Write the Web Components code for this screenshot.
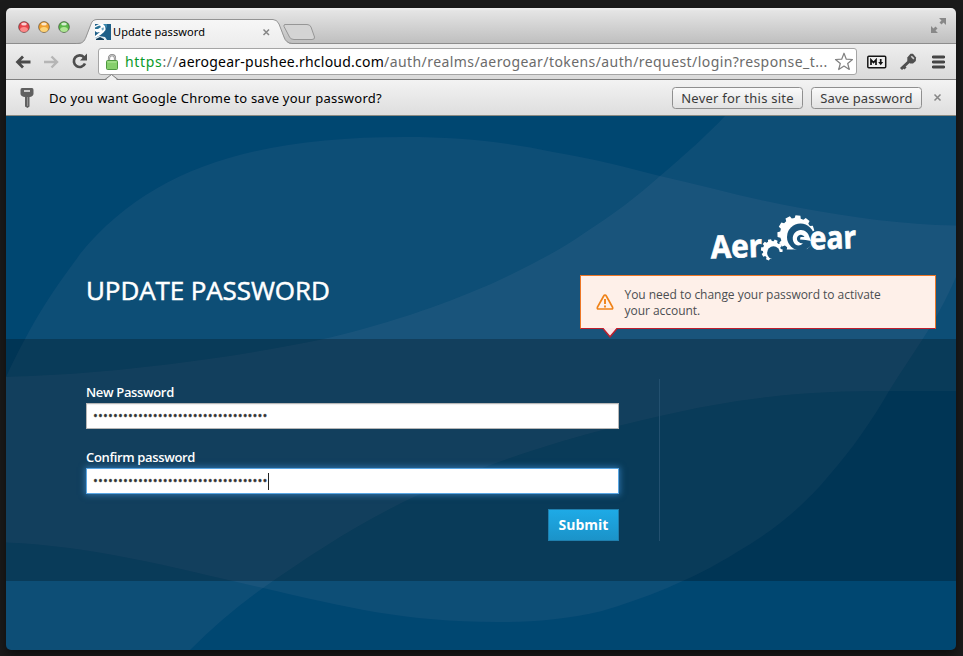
<!DOCTYPE html>
<html lang="en">
<head>
<meta charset="utf-8">
<title>Update password</title>
<style>
html,body{margin:0;height:100%;overflow:hidden}
body{background:#1b1b1b;font-family:"Noto Sans","Open Sans",sans-serif;color:#000}
</style>
</head>
<body>
<browser-window>
  <tab-strip slot="chrome">Update password</tab-strip>
  <nav-bar slot="chrome"></nav-bar>
  <info-bar slot="chrome">Do you want Google Chrome to save your password?
    <bar-button slot="actions" style="--w:131px;--ls:.24px">Never for this site</bar-button>
    <bar-button slot="actions" style="--w:111px;--ls:.14px">Save password</bar-button>
  </info-bar>
  <login-page>
    <page-title slot="title">UPDATE PASSWORD</page-title>
    <aero-logo slot="side"></aero-logo>
    <alert-box slot="side">You need to change your password to activate your account.</alert-box>
    <password-field slot="form" label="New Password"></password-field>
    <password-field slot="form" label="Confirm password" focused></password-field>
    <submit-button slot="form">Submit</submit-button>
  </login-page>
</browser-window>
<script>
const define = (name, html) => customElements.define(name, class extends HTMLElement {
  constructor() {
    super();
    const t = document.createElement('template');
    t.innerHTML = typeof html === 'function' ? html(this) : html;
    this.attachShadow({mode: 'open'}).append(t.content.cloneNode(true));
  }
});

define('browser-window', `<style>
:host{display:flex;flex-direction:column;box-sizing:border-box;width:963px;height:656px;padding:8px 7px 6px 6px}
.w{display:flex;flex-direction:column;flex:1;border-radius:5px;overflow:hidden;box-shadow:0 5px 12px #0008}
</style><div class="w"><slot name="chrome"></slot><slot></slot></div>`);

define('tab-strip', `<style>
:host{display:flex;height:36px;background:linear-gradient(#f0f0f0 0,#e4e4e4 3px,#bfbfbf 35px);position:relative;align-items:flex-end}
svg.sh{position:absolute;left:0;top:0}
.lights{display:flex;gap:8px;padding:0 0 11px 12px;width:77px;box-sizing:border-box}
.tab{display:flex;align-items:center;width:176px;height:23px;margin-left:12px;font-size:11px;letter-spacing:.09px;position:relative}
.tab span{flex:1;padding:0 0 2px 2px}
.lights svg,.tab svg{display:block;flex:none}
.full{position:absolute;right:10px;top:10px}
</style>
<svg class="sh" width="950" height="36"><defs><linearGradient id="t" x2="0" y2="1"><stop stop-color="#f7f7f7"/><stop offset="1" stop-color="#ededed"/></linearGradient></defs>
<path d="M0 35.500H950" stroke="#8d8d8d"/>
<path d="M70 36C76 36 78 34 80 30L85 16Q86.500 11.500 91 11.500H267Q271 11.500 273 16L278 30Q280 35.500 286 36Z" fill="url(#t)"/>
<path d="M70 35.500C77 35.500 78 33.500 80 29L85 16Q86.500 11.500 91 11.500H267Q271 11.500 273 16L278 29Q280 35 286 35.500" fill="none" stroke="#949494"/>
<path d="M279 16.500H301Q304 16.500 305 19L308.500 29Q309 31.500 306 31.500H288Q284.500 31.500 283.500 29L278 18.500Q277.500 16.500 279 16.500Z" fill="#d4d4d4" stroke="#969696"/></svg>
<div class="lights">${[['#e8454b','#ff9b98'],['#f0a030','#ffe08c'],['#5cb84a','#c4f0a8']].map(([a,b]) =>
`<svg width="12" height="12"><circle cx="6" cy="6" r="5.400" fill="${a}" stroke="#0006"/><ellipse cx="6" cy="8.400" rx="3.800" ry="2.500" fill="${b}" opacity=".8"/><ellipse cx="6" cy="3" rx="2.800" ry="1.500" fill="#fff" opacity=".75"/></svg>`).join('')}</div>
<div class="tab"><svg width="16" height="16" style="margin-bottom:2px"><path d="M0 0H16V16H0Z" fill="#1e5f88"/><path d="M5 0H12V4L9 1Z" fill="#3a88ad"/><path d="M0 2 4 0H8Q11 2 10.500 6L8.500 8.500 5.500 11 0 14V12L5 8 2 8.500 0 7Z" fill="#fff"/><path d="M0 3.500 3 2 5 1.500 6 3 3 5 0 5Z" fill="#2c7396"/><path d="M6.500 4 9 3.500 8.500 6 7 6.500Z" fill="#6fa8c4"/><path d="M0 16V14L4 12 10 13 12 16Z" fill="#e4eef3"/><path d="M1 15 5 13 9 15V16H1Z" fill="#123c5a"/></svg>
<span><slot></slot></span><svg width="9" height="9" style="margin:0 0 1px"><path d="M1.500 1.500 7 7M7 1.500 1.500 7" stroke="#858585" stroke-width="1.500"/></svg></div>
<svg class="full" width="15" height="15"><path d="M8 0H15V7L12.500 4.500 10.500 6.500 8.500 4.500 10.500 2.500ZM0 8V15H7L4.500 12.500 6.500 10.500 4.500 8.500 2.500 10.500Z" fill="#888"/></svg>`);

define('nav-bar', `<style>
:host{display:flex;height:36px;box-sizing:border-box;background:linear-gradient(#eee,#dadada);border-bottom:1px solid #7f7f7f;align-items:center;padding:0 10px 0 9px}
svg{display:block;flex:none}
.box{display:flex;align-items:center;box-sizing:border-box;width:759px;height:27px;margin-left:10px;background:#fff;border:1px solid #a5a5a5;border-radius:3px;padding:0 4px 0 7px;font-size:14px;white-space:pre}
.u{width:709px;padding-left:7px;flex:none;color:#6b6b6b;letter-spacing:.42px}
.u b{font-weight:400;letter-spacing:.66px}.u .g{color:#0a9a2a}.u .h{color:#000;letter-spacing:.24px}
</style>
<svg width="17" height="16"><path d="M15.500 8H3M8 2.500 2.500 8 8 13.500" fill="none" stroke="#4a4a4a" stroke-width="2.800"/></svg>
<svg width="17" height="16" style="margin-left:11px"><path d="M1 8H13.500M8.500 2.500 14 8 8.500 13.500" fill="none" stroke="#b5b5b5" stroke-width="2.400"/></svg>
<svg width="17" height="17" style="margin-left:11px"><path d="M13 4.300A5.800 5.800 0 1 0 14 10.500" fill="none" stroke="#4e4e4e" stroke-width="2.700"/><path d="M16 0.500V7.500H9Z" fill="#4e4e4e"/></svg>
<div class="box"><svg width="12" height="16"><path d="M3 8V4.200a3 3 0 0 1 6 0V8" fill="none" stroke="#888" stroke-width="2.200"/><path d="M3 8V4.200a3 3 0 0 1 6 0V8" fill="none" stroke="#ddd" stroke-width=".7"/><rect x=".5" y="6.500" width="11" height="9" rx="1" fill="#86cf6c" stroke="#4f9940"/><path d="M1.500 8H10.500" stroke="#b6eb9e"/></svg>
<div class="u"><b class="g">https</b><b>://</b><b class="h">aerogear-pushee.rhcloud.com</b>/auth/realms/aerogear/tokens/auth/request/login?response_t...</div>
<svg width="20" height="19"><path d="M10 1.200 12.300 7.200 18.500 7.500 13.700 11.500 15.300 17.500 10 14.100 4.700 17.500 6.300 11.500 1.500 7.500 7.700 7.200Z" fill="#fff" stroke="#808080" stroke-width="1.200" stroke-linejoin="round"/></svg></div>
<svg width="20" height="14" style="margin-left:10px"><rect x=".8" y="1.300" width="17.900" height="11.400" rx="1" fill="#eee" stroke="#151515" stroke-width="1.500"/><path d="M4 10V4.800L6.500 7.500 9 4.800V10M13.700 4V8" fill="none" stroke="#111" stroke-width="1.700"/><path d="M11.200 7H16.200L13.700 10.300Z" fill="#111"/></svg>
<svg width="18" height="18" style="margin-left:12px"><path d="M10 8.500 2 16M4.500 13.500 6.500 15.500" stroke="#505050" stroke-width="3"/><path d="M8.300 4.500 11.500.8 14 .8 17 4.500 16.800 8 14 10.500 11 10.500 8.300 8Z" fill="#505050"/><path d="M12.300 3.300 14.900 5.900" stroke="#d0d0d0" stroke-width="1.600"/></svg>
<svg width="13" height="14" style="margin-left:15px"><path d="M1.300 2H11.700M1.300 7H11.700M1.300 12H11.700" stroke="#454545" stroke-width="2.800" stroke-linecap="round"/></svg>`);

define('info-bar', `<style>
:host{display:flex;height:36px;box-sizing:border-box;background:linear-gradient(#f3f3f3,#dedede);border-bottom:1px solid #8a8a82;align-items:center;padding:0 14px 0 14px;position:relative;font-size:13px;letter-spacing:.22px}
svg{display:block;flex:none}.nub{position:absolute;left:98px;top:-6px}
.m{flex:1;padding-left:15px}.a{display:flex;gap:8px}
</style><svg class="nub" width="16" height="7"><path d="M1 7 7.500.500 14 7Z" fill="#f1f1f1"/><path d="M1 5.500 7.500.500 14 5.500" fill="none" stroke="#7f7f7f"/></svg>
<svg width="14" height="20"><path d="M2 0H12Q13.500 0 13.500 2V6Q13 8.500 9.500 9V18.500L7.500 20 5 18.500V9Q1 8.500 .5 6V2Q.5 0 2 0Z" fill="#606060"/><path d="M4 3H10" stroke="#eee" stroke-width="1.700"/><path d="M7.600 9V18" stroke="#999"/></svg>
<div class="m"><slot></slot></div><div class="a"><slot name="actions"></slot></div>
<svg width="9" height="9" style="margin-left:11px"><path d="M1.500 1.500 7.500 7.500M7.500 1.500 1.500 7.500" stroke="#858585" stroke-width="1.500"/></svg>`);

define('bar-button', `<style>
:host{display:flex;justify-content:center;align-items:center;width:var(--w);height:22px;box-sizing:border-box;border:1px solid #8f8f8f;border-radius:3.500px;background:linear-gradient(#fafafa,#e2e2e2);color:#3a3a3a;font-size:13px;letter-spacing:var(--ls);white-space:nowrap}
</style><slot></slot>`);

define('login-page', `<style>
:host{display:flex;flex-direction:column;flex:1;background:#004771;position:relative;font-family:"Open Sans",sans-serif}
.bg{position:absolute;left:0;top:0}
header{display:grid;grid-template-columns:494px 356px;height:223px;box-sizing:border-box;padding-left:80px;position:relative}
.side{display:flex;flex-direction:column;padding-top:97px}
main{display:flex;height:242px;background:rgba(0,0,0,.245);position:relative;padding:40px 0 0 80px;box-sizing:border-box}
.form{display:flex;flex-direction:column;width:533px;padding-right:40px;height:162px;border-right:1px solid #23506f}
</style>
<svg class="bg" width="950" height="534" viewBox="6 116 950 534"><g fill="#f0c8dc" fill-opacity=".054">
<path d="M6 377C40 305 62 280 80 254C150 168 255 137 405 137C460 137 505 142 553 152C595 159 625 167 660 176C705 186 750 199 798 207.500C850 217 905 225 956 225.500V277C935 325 918 345 889 391C871 422 853 448 829 475.600C803 507 772 532 737 552C693 580 640 600 602 611C565 620 530 622 497 622C405 622 345 607 263 588C175 568 95 546 6 542.500Z"/>
<path d="M6 377C62 375 105 372 154 366C215 359 265 351 319 340C385 325 440 306 491 284C530 266 560 250 583 234C615 213 638 196 660 176C686 154 707 135 725 116H956V391H889C845 391 808 392 768 397C730 401 695 408 660 416Q638 421 618 426C570 438 525 452 485 467Q450 480 418 495C360 522 310 555 263 588Q225 615 190 650H6Z"/></g></svg>
<header><slot name="title"></slot><div class="side"><slot name="side"></slot></div></header>
<main><div class="form"><slot name="form"></slot></div></main>`);

define('page-title', `<style>
:host{display:block;align-self:start;padding-top:157px;font-size:26px;line-height:35px;letter-spacing:-.1px;color:#fff;white-space:nowrap;-webkit-text-stroke:.5px #fff}
</style><slot></slot>`);

// Outline of a toothed wheel with n teeth between radii r and R.
const wheel = (cx, cy, r, R, n, turn) => {
  const p = [];
  for (let i = 0; i < n; i++) for (const [f, q] of [[-.34, r], [-.23, R], [.23, R], [.34, r]]) {
    const a = (i + f) / n * 2 * Math.PI + turn;
    p.push((cx + q * Math.cos(a)).toFixed(2) + ' ' + (cy + q * Math.sin(a)).toFixed(2));
  }
  return 'M' + p.join('L') + 'Z';
};
define('aero-logo', `<style>
:host{display:block;height:62px;padding-left:130px;box-sizing:border-box}
svg{display:block;margin-top:-13px}text{font:700 31.500px "Open Sans",sans-serif;fill:#fff;stroke:#fff;stroke-width:.7px}
</style><svg width="170" height="75" viewBox="710 200 170 75">
<defs><mask id="b"><path d="M770 210H820V249.500H770Z" fill="#fff"/><circle cx="800.500" cy="237" r="13.500"/></mask>
<mask id="s"><path d="M758 236H790V262H758Z" fill="#fff"/><circle cx="773.500" cy="252.700" r="6.400"/><path d="M773 252 786 252V264H771Z"/></mask></defs>
<text transform="translate(711 258.500) rotate(-2)" textLength="51.500" lengthAdjust="spacingAndGlyphs">Aer</text>
<path d="${wheel(796, 234, 16, 18.7, 11, .25)}" fill="#fff" mask="url(#b)"/>
<path d="${wheel(771.8, 250, 9, 10.9, 10, .1)}" fill="#fff" mask="url(#s)"/>
<path d="M795.500 244.500A8.300 8.300 0 1 1 809 236L811 241Q806 239.500 800 239.500L800.500 237H804.500A4 4 0 1 0 798 241.500Q800 243.500 803 243.500Q799 247 795.500 244.500Z" fill="#fff"/>
<text transform="translate(810 249.600) rotate(-2)" textLength="46.500" lengthAdjust="spacingAndGlyphs">ear</text></svg>`);

define('alert-box', `<style>
:host{display:flex;width:356px;height:54px;box-sizing:border-box;border:1px solid #ec7626;border-bottom-color:#bf1e2c;background:#fef0e9;position:relative;align-items:center;padding-left:15px;font-size:12px;line-height:16px;letter-spacing:-.035px;color:#4b4e51}
svg{display:block;flex:none}p{margin:1px 0 0 10.500px;width:270px}
.arrow{position:absolute;left:21px;bottom:-10px}
</style><svg width="18" height="18"><path d="M9 2Q9.800 2 10.300 3L16.500 14Q17.200 16 15.500 16H2.500Q.8 16 1.500 14L7.700 3Q8.200 2 9 2Z" fill="none" stroke="#ef8218" stroke-width="1.700"/><path d="M9 6V11M9 12.500V14.500" stroke="#ef8218" stroke-width="1.900"/></svg>
<p><slot></slot></p><svg class="arrow" width="16" height="10"><path d="M1 0H15L8 9Z" fill="#fbe6e7"/><path d="M.5 0 8 8.800 15.500 0" fill="none" stroke="#bf1e2c" stroke-width="1.400"/></svg>`);

define('password-field', el => `<style>
:host{display:block;height:65px}
label{display:block;font-weight:600;font-size:13px;line-height:18px;padding:4px 0 2px;letter-spacing:-.35px;color:#fff}
.f{display:flex;align-items:center;height:26px;box-sizing:border-box;border:1px solid #b6b6b6;background:#fff;padding:0 6px 2px;font-size:13px;color:#333;letter-spacing:.1px;-webkit-text-stroke:.3px #333;box-shadow:inset 0 1px 1px #0001}
:host([focused]) .f{border-color:#5aa7e4;box-shadow:0 0 6px 1px #3d8fd4aa}
i{width:1px;height:17px;background:#222;position:relative;top:1px}
</style><label>${el.getAttribute('label')}</label><div class="f"><span>${'•'.repeat(35)}</span>${el.hasAttribute('focused') ? '<i></i>' : ''}</div>`);

define('submit-button', `<style>
:host{display:flex;align-self:flex-end;align-items:center;justify-content:center;width:71px;height:32px;box-sizing:border-box;padding-bottom:2px;border:1px solid #1f7fae;background:linear-gradient(#1eaae6,#1b93c9);color:#fff;font-weight:700;font-size:14px}
</style><slot></slot>`);
</script>
</body>
</html>
